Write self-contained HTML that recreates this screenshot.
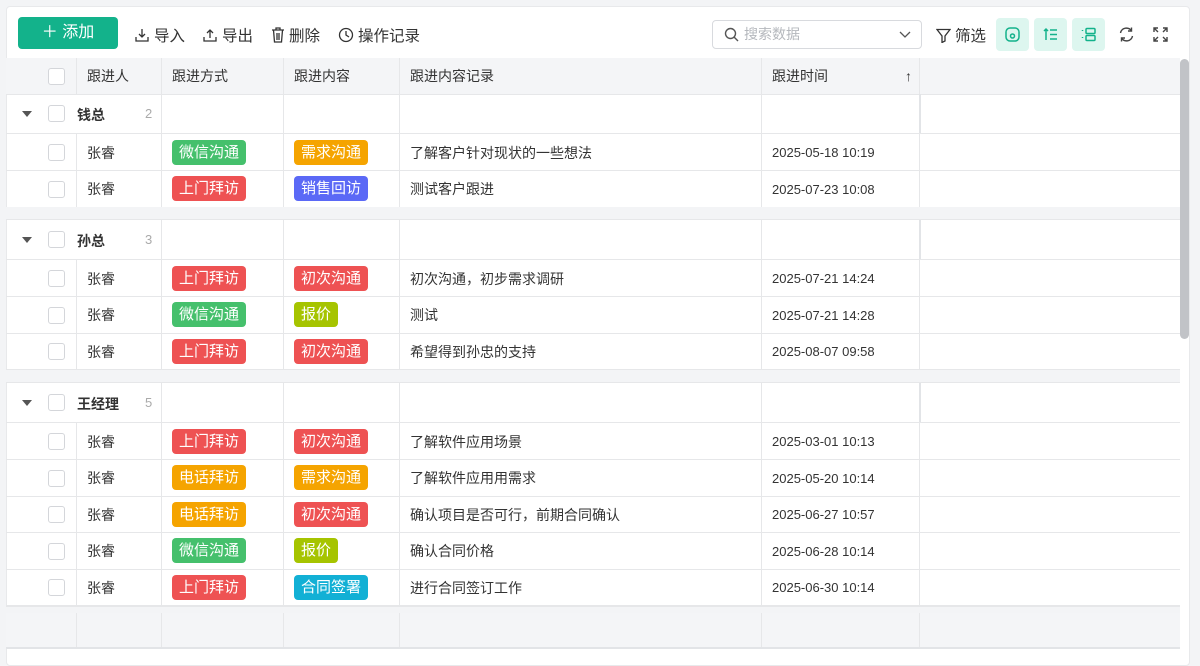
<!DOCTYPE html>
<html><head><meta charset="utf-8"><style>
*{box-sizing:border-box;margin:0;padding:0}
body{width:1200px;height:661px;background:#f3f4f6;font-family:"Liberation Sans","Noto Sans CJK SC",sans-serif;position:relative;overflow:hidden;color:#333}
.panel{position:absolute;left:6px;top:6px;width:1184px;height:660px;background:#fff;border:1px solid #e8e9eb;border-radius:4px}
.a{position:absolute}
.btn{left:18px;top:17px;width:100px;height:32px;background:#13b28b;border-radius:4px;color:#fff;font-size:16px;line-height:32px;text-align:center}
.tb{top:24px;font-size:15.5px;color:#333;display:flex;align-items:center;gap:4px}
.search{left:712px;top:20px;width:210px;height:29px;border:1px solid #d8dade;border-radius:4px;font-size:14px;color:#b5b8bd;line-height:27px;padding-left:31px}
.ib{top:18px;width:33px;height:33px;background:#ddf6ef;border-radius:4px}
.row{position:absolute;left:6px;width:1174px;border-bottom:1px solid #e6e7e9}
.c{position:absolute;top:0;height:100%;border-left:1px solid #e6e7e9;font-size:14px;display:flex;align-items:center;padding-left:10px}
.cb{position:absolute;left:42px;width:17px;height:17px;border:1px solid #d4d6da;border-radius:3px;background:#fff}
.tag{display:inline-block;height:25px;line-height:25px;padding:0 7px;border-radius:4px;color:#fff;font-size:15px}
.g{background:#45c06c}.r{background:#ee5253}.o{background:#f5a400}.p{background:#5b69f6}.y{background:#a6c400}.cy{background:#12b0d5}
.gap{position:absolute;left:6px;width:1174px;background:#f3f4f6;border-bottom:1px solid #e6e7e9}
.hd{background:#f4f5f7}
</style></head><body>
<div class="panel"></div>
<div class="a btn">＋ 添加</div>
<div class="a tb" style="left:134px"><svg width="16" height="16" viewBox="0 0 16 16" fill="none" stroke="#333" stroke-width="1.3"><path d="M8 2v8M5 7l3 3 3-3M2 10v4h12v-4"/></svg>导入</div>
<div class="a tb" style="left:202px"><svg width="16" height="16" viewBox="0 0 16 16" fill="none" stroke="#333" stroke-width="1.3"><path d="M8 11V3M5 6l3-3 3 3M2 10v4h12v-4"/></svg>导出</div>
<div class="a tb" style="left:271px"><svg width="14" height="16" viewBox="0 0 14 16" fill="none" stroke="#333" stroke-width="1.3"><path d="M1 3h12M5 3V1h4v2M2.5 3l1 12h7l1-12M6 6v7M8 6v7"/></svg>删除</div>
<div class="a tb" style="left:338px"><svg width="16" height="16" viewBox="0 0 16 16" fill="none" stroke="#333" stroke-width="1.3"><circle cx="8" cy="8" r="6.5"/><path d="M8 4v4l3 2"/></svg>操作记录</div>
<div class="a search">搜索数据</div>
<svg class="a" style="left:724px;top:27px" width="15" height="15" viewBox="0 0 15 15" fill="none" stroke="#555" stroke-width="1.4"><circle cx="6.5" cy="6.5" r="5"/><path d="M10 10l4 4"/></svg>
<svg class="a" style="left:899px;top:31px" width="12" height="8" viewBox="0 0 12 8" fill="none" stroke="#555" stroke-width="1.3"><path d="M1 1l5 5 5-5"/></svg>
<div class="a tb" style="left:936px"><svg width="15" height="15" viewBox="0 0 15 15" fill="none" stroke="#333" stroke-width="1.3"><path d="M1 1.5h13L9 8v5l-3 1.5V8z"/></svg>筛选</div>
<div class="a ib" style="left:996px"><svg style="margin:9px" width="15" height="15" viewBox="0 0 15 15" fill="none" stroke="#13b28b" stroke-width="1.5"><rect x="1" y="1" width="13" height="13" rx="4"/><circle cx="7.5" cy="9" r="2"/></svg></div>
<div class="a ib" style="left:1034px"><svg style="margin:9px" width="15" height="15" viewBox="0 0 15 15" fill="none" stroke="#13b28b" stroke-width="1.5"><path d="M3 13V2M1 4l2-2 2 2M7 3h7M7 7.5h7M7 12h7"/></svg></div>
<div class="a ib" style="left:1072px"><svg style="margin:9px" width="15" height="15" viewBox="0 0 15 15" fill="none" stroke="#13b28b" stroke-width="1.5"><path d="M1.5 3v1M1.5 10v1"/><rect x="5" y="1.5" width="9" height="5" rx="1"/><rect x="5" y="8.5" width="9" height="5" rx="1"/></svg></div>
<svg class="a" style="left:1118px;top:26px" width="17" height="17" viewBox="0 0 17 17" fill="none" stroke="#444" stroke-width="1.4"><path d="M2.5 7a6 6 0 0 1 11-2M14.5 10a6 6 0 0 1-11 2M13.5 1.5V5H10M3.5 15.5V12H7"/></svg>
<svg class="a" style="left:1153px;top:27px" width="15" height="15" viewBox="0 0 15 15" fill="none" stroke="#444" stroke-width="1.4"><path d="M1 5V1h4M10 1h4v4M14 10v4h-4M5 14H1v-4M1 1l4 4M14 1l-4 4M14 14l-4-4M1 14l4-4"/></svg>

<div class="row hd" style="top:58px;height:37px"><div class="cb" style="top:10px"></div>
<div class="c" style="left:70px">跟进人</div><div class="c" style="left:155px">跟进方式</div><div class="c" style="left:277px">跟进内容</div><div class="c" style="left:393px">跟进内容记录</div><div class="c" style="left:755px;width:158px">跟进时间<span style="position:absolute;right:7px;font-size:14px">↑</span></div><div class="c" style="left:913px"></div></div>

<div id="rows"></div>
<div class="gap" style="top:606px;height:8px;border-top:1px solid #e6e7e9"></div>
<div class="row hd" style="top:613px;height:36px;border-bottom:2px solid #e2e4e7"><div class="c" style="left:70px"></div><div class="c" style="left:155px"></div><div class="c" style="left:277px"></div><div class="c" style="left:393px"></div><div class="c" style="left:755px"></div><div class="c" style="left:913px"></div></div>
<div class="a" style="left:1180px;top:59px;width:9px;height:280px;background:#c1c3c7;border-radius:5px"></div>
<script>
var cls={'微信沟通':'g','上门拜访':'r','电话拜访':'o','需求沟通':'o','销售回访':'p','初次沟通':'r','报价':'y','合同签署':'cy'};
var groups=[[94,'钱总',2,[['微信沟通','需求沟通','了解客户针对现状的一些想法','2025-05-18 10:19'],['上门拜访','销售回访','测试客户跟进','2025-07-23 10:08']]],
[220,'孙总',3,[['上门拜访','初次沟通','初次沟通，初步需求调研','2025-07-21 14:24'],['微信沟通','报价','测试','2025-07-21 14:28'],['上门拜访','初次沟通','希望得到孙忠的支持','2025-08-07 09:58']]],
[383,'王经理',5,[['上门拜访','初次沟通','了解软件应用场景','2025-03-01 10:13'],['电话拜访','需求沟通','了解软件应用用需求','2025-05-20 10:14'],['电话拜访','初次沟通','确认项目是否可行，前期合同确认','2025-06-27 10:57'],['微信沟通','报价','确认合同价格','2025-06-28 10:14'],['上门拜访','合同签署','进行合同签订工作','2025-06-30 10:14']]]];
var h='';
groups.forEach(function(g,gi){
 var t=g[0];
 if(gi>0)h+='<div class="gap" style="top:'+(t-13)+'px;height:13px"></div>';
 h+='<div class="row" style="top:'+t+'px;height:40px"><svg class="a" style="left:16px;top:17px" width="10" height="6"><path d="M0 0h10L5 6z" fill="#555"/></svg><div class="cb" style="top:11px"></div><div class="a" style="left:71px;top:11px;font-size:14px;font-weight:bold">'+g[1]+'</div><div class="a" style="left:139px;top:12px;font-size:13px;color:#aaa">'+g[2]+'</div><div class="c" style="left:155px"></div><div class="c" style="left:277px"></div><div class="c" style="left:393px"></div><div class="c" style="left:755px"></div><div class="c" style="left:913px;border-left:2px solid #e2e4e7"></div></div>';
 t+=40;
 g[3].forEach(function(r){
  h+='<div class="row" style="top:'+t+'px;height:37px"><div class="cb" style="top:10px"></div><div class="c" style="left:70px;padding-top:1px">张睿</div><div class="c" style="left:155px"><span class="tag '+cls[r[0]]+'">'+r[0]+'</span></div><div class="c" style="left:277px"><span class="tag '+cls[r[1]]+'">'+r[1]+'</span></div><div class="c" style="left:393px;padding-top:1px">'+r[2]+'</div><div class="c" style="left:755px;font-size:13px;padding-top:1px">'+r[3]+'</div><div class="c" style="left:913px"></div></div>';
  t+=36.5;
 });
});
document.getElementById('rows').innerHTML=h;
</script>
</body></html>
